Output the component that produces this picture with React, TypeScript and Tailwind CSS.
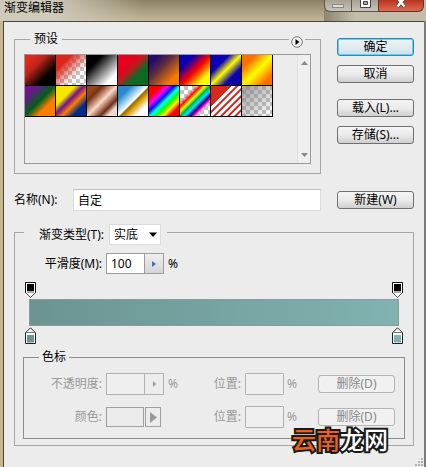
import { useState } from "react";
import type { ReactNode } from "react";

const presets = [
    { name: "前景到背景", fill: "[background:linear-gradient(135deg,#e0281c_15%,#c0241a_35%,#000_72%)]" },
    { name: "前景到透明", fill: "[background:linear-gradient(135deg,#dc2418_25%,#dc241800_68%),repeating-conic-gradient(#c4c4c4_0_25%,#fff_0_50%)_0_0/8px_8px]" },
    { name: "黑白", fill: "[background:linear-gradient(135deg,#000_26%,#fff_80%)]" },
    { name: "红绿", fill: "[background:linear-gradient(135deg,#e6001e_30%,#c01a1e_46%,#0a6a24_66%)]" },
    { name: "紫橙", fill: "[background:linear-gradient(135deg,#260a6e_15%,#5a2c40_40%,#f87a04_80%)]" },
    { name: "蓝红黄", fill: "[background:linear-gradient(135deg,#0a00b2_24%,#ff0000_52%,#fffc00_80%)]" },
    { name: "蓝黄蓝", fill: "[background:linear-gradient(135deg,#0b01b8_30%,#fdfa00_50%,#0b02aa_72%)]" },
    { name: "橙黄橙", fill: "[background:linear-gradient(135deg,#ff6e02_22%,#ffff00_52%,#ff6d00_84%)]" },
    { name: "紫绿橙", fill: "[background:linear-gradient(135deg,#6f158e_18%,#00601b_50%,#fd7c00_70%)]" },
    { name: "黄紫橙蓝", fill: "[background:linear-gradient(135deg,#f9e600_32%,#6f158e_46%,#fd7c00_60%,#002b86_78%)]" },
    { name: "铜色", fill: "[background:linear-gradient(135deg,#97461a_14%,#7a3210_26%,#fbd8c5_50%,#6c2e16_72%,#efdbcd_84%)]" },
    { name: "铬黄", fill: "[background:linear-gradient(135deg,#2989cc_22%,#8cc8ee_36%,#fff_50%,#906a00_54%,#d99f00_62%,#fff_80%)]" },
    { name: "色谱", fill: "[background:linear-gradient(135deg,#ff0000_20%,#ff00ff_32%,#0000ff_42%,#00ffff_52%,#00ff00_62%,#ffff00_73%,#ff0000_84%)]" },
    { name: "透明彩虹", fill: "[background:linear-gradient(135deg,#ff000000_26%,#ff0000_34%,#fffc00_42%,#01b439_50%,#00eaff_58%,#000390_66%,#ff00c6_72%,#ff00c600_78%),repeating-conic-gradient(#c4c4c4_0_25%,#fff_0_50%)_0_0/8px_8px]" },
    { name: "透明条纹", fill: "[background:linear-gradient(135deg,#d8281c_34%,transparent_34%),repeating-linear-gradient(135deg,#fff_0_2px,#c02c24_3px_4px,#fff_5px)]" },
    { name: "中灰密度", fill: "[background:linear-gradient(135deg,#808080b0_10%,#80808010_90%),repeating-conic-gradient(#c4c4c4_0_25%,#fff_0_50%)_0_0/8px_8px]" },
];

function PushButton({ children, primary, disabled, className = "" }: { children: ReactNode; primary?: boolean; disabled?: boolean; className?: string }) {
    const tone = disabled
        ? "border-[#b4b4b4] bg-[#f1f1f1] text-[#888]"
        : primary
          ? "border-[#2c88b4] bg-linear-to-b from-[#eef3f6] via-[#e4ecf0] to-[#c4e2ee] text-black ring-1 ring-inset ring-[#6fcdea]"
          : "border-[#707070] bg-linear-to-b from-[#f4f4f4] via-[#ebebeb] to-[#cfcfcf] text-black";
    return (
        <button type="button" disabled={disabled} className={`flex h-[18px] w-[77px] shrink-0 items-center justify-center rounded-[3px] border ${tone} ${className}`}>
            {children}
        </button>
    );
}

function OpacityStop({ label }: { label: string }) {
    return (
        <button type="button" aria-label={label}>
            <svg width="11" height="16" viewBox="0 0 11 16" className="block">
                <path d="M.5 .5h10v10L5.5 15.5 .5 10.500z" fill="#fff" stroke="#555" />
                <path d="M.5 11V.5h10V11" fill="none" stroke="#111" />
                <path d="M2 9h7v2H2z" fill="#aaa" />
                <path d="M2 2h7v7H2z" fill="#000" />
            </svg>
        </button>
    );
}

function ColorStop({ label, color }: { label: string; color: string }) {
    return (
        <button type="button" aria-label={label}>
            <svg width="11" height="17" viewBox="0 0 11 17" className="block">
                <path d="M5.500 .8l5 5v10.700H.5V5.800z" fill="#fff" stroke="#222" />
                <path d="M1 5.500h9" stroke="#777" />
                <path d="M2 8h7v7.500H2z" fill={color} />
            </svg>
        </button>
    );
}

function PositionFields({ id }: { id: string }) {
    return (
        <>
            <label htmlFor={id} className="flex-1 text-right">位置:</label>
            <input id={id} disabled className="ml-1 h-[22px] w-[39px] rounded-[1px] border border-[#b0b0b0] bg-[#efefef]" />
            <span className="ml-[3px] w-[14px]">%</span>
            <PushButton disabled className="ml-[17px]">删除(D)</PushButton>
        </>
    );
}

export default function App() {
    const [name, setName] = useState("自定");
    const [smoothness, setSmoothness] = useState("100");

    return (
        <div className="relative flex min-h-screen flex-col overflow-hidden bg-linear-to-r from-[#c8b78f] from-50% to-[#7c7d6c] to-50% pr-[2px] pl-[3px] font-['Noto_Sans','Noto_Sans_CJK_SC',sans-serif] text-[12px] leading-[18px] text-black">
            {/* Title bar */}
            <header className="-mr-[2px] -ml-[3px] flex h-[21px] items-start justify-between [background:linear-gradient(90deg,#d0cabb_12%,#d0cabb00_34%),linear-gradient(180deg,#8b8063,#a89d7e_50%,#c2b797)]">
                <h1 className="pl-1 leading-[16px]">渐变编辑器</h1>
                <div className="flex h-full w-[102px] bg-linear-to-r from-[#8d8570] to-[#c3bcab] to-30%">
                    <button type="button" aria-label="最小化" className="flex h-[12px] w-[28px] items-center justify-center rounded-bl-md border border-t-0 border-[#5c574e] bg-linear-to-b from-[#a8a294] to-[#c9c4b9]">
                        <span className="h-[4px] w-[12px] border border-[#8d887f] bg-[#ddd]" />
                    </button>
                    <button type="button" aria-label="最大化" className="flex h-[12px] w-[26px] items-start justify-center border-b border-[#5c574e] bg-linear-to-b from-[#a8a294] to-[#c9c4b9]">
                        <svg width="11" height="8" viewBox="0 0 11 8">
                            <path d="M.5 0v7.500h10V0" fill="#fff" stroke="#444" />
                            <path d="M3.500 1.500h4v3h-4z" fill="#aaa" stroke="#444" />
                        </svg>
                    </button>
                    <button type="button" aria-label="关闭" className="flex h-[12px] w-[46px] items-start justify-center rounded-br-md border border-t-0 border-[#63322a] bg-linear-to-b from-[#b8331f] to-[#df6a4e]">
                        <svg width="12" height="8" viewBox="0 0 12 8">
                            <path d="M2.500 -2l7 8.500M9.500 -2l-7 8.500" stroke="#5a3a38" strokeWidth="4" />
                            <path d="M2.500 -2l7 8.500M9.500 -2l-7 8.500" stroke="#fff" strokeWidth="2.500" />
                        </svg>
                    </button>
                </div>
            </header>

            <main className="relative flex-1 border-t border-l border-[#4b463a] bg-[#ececec] px-[10px] pt-2 pb-[20px]">
                {/* Presets */}
                <div className="flex gap-4">
                    <div className="relative min-w-0 flex-1">
                        <fieldset className="min-w-0 border border-[#a6a6a6] px-[9px] pt-[6px] pb-[9px]">
                            <legend className="ml-[6px] px-1 leading-[18px]">预设</legend>
                            <div className="flex h-[110px] justify-between border border-[#9a9a9a]">
                                <div className="grid grid-cols-8 content-start">
                                    {presets.map((p) => (
                                        <button key={p.name} type="button" aria-label={p.name} className={`size-[31px] border-r border-b border-black ${p.fill}`} />
                                    ))}
                                </div>
                                <div className="flex w-[13px] flex-col items-center justify-between border-l border-[#e0e0e0] bg-[#efefef] py-[6px]">
                                    <svg width="7" height="4" viewBox="0 0 7 4"><path d="M0 4l3.500-4L7 4z" fill="#888" /></svg>
                                    <svg width="7" height="4" viewBox="0 0 7 4"><path d="M0 0l3.500 4L7 0z" fill="#888" /></svg>
                                </div>
                            </div>
                        </fieldset>
                        <button type="button" aria-label="预设菜单" className="absolute top-[6px] right-4 bg-[#ececec] px-[2px]">
                            <svg width="12" height="12" viewBox="0 0 12 12" className="block">
                                <circle cx="6" cy="6" r="5.300" fill="#f2f2f2" stroke="#777" />
                                <path d="M4.500 3v6l4-3z" fill="#000" />
                            </svg>
                        </button>
                    </div>

                    <div className="flex flex-col gap-[9px] pt-2">
                        <PushButton primary>确定</PushButton>
                        <PushButton>取消</PushButton>
                        <PushButton className="mt-[7px]">载入(L)...</PushButton>
                        <PushButton>存储(S)...</PushButton>
                    </div>
                </div>

                {/* Name */}
                <div className="mt-[15px] flex items-center">
                    <label htmlFor="name" className="w-[59px]">名称(N):</label>
                    <input id="name" value={name} onChange={(e) => setName(e.target.value)} className="mr-4 h-[22px] min-w-0 flex-1 border border-[#dcdcdc] border-t-[#c4c4c4] bg-white px-1" />
                    <PushButton>新建(W)</PushButton>
                </div>

                {/* Gradient settings */}
                <fieldset className="mt-[9px] min-w-0 border border-[#a6a6a6] px-[10px] pb-[6px]">
                    <legend className="-ml-px pt-1 pr-[6px]">
                        <span className="flex items-center">
                            <label htmlFor="type" className="w-[80px] text-right">渐变类型(T):</label>
                            <span className="relative ml-[5px] flex items-center">
                                <select id="type" className="h-[21px] w-[52px] appearance-none border border-[#dcdcdc] bg-white pl-1 text-[12px]">
                                    <option>实底</option>
                                    <option>杂色</option>
                                </select>
                                <svg width="8" height="5" viewBox="0 0 8 5" className="pointer-events-none absolute right-1"><path d="M0 .5h8L4 5z" fill="#000" /></svg>
                            </span>
                        </span>
                    </legend>

                    <div className="mt-2 flex items-center">
                        <label htmlFor="smooth" className="w-[77px] text-right">平滑度(M):</label>
                        <input id="smooth" value={smoothness} onChange={(e) => setSmoothness(e.target.value)} className="ml-1 h-[21px] w-[39px] border border-[#9c9c9c] bg-white px-1" />
                        <button type="button" aria-label="调整平滑度" className="flex h-[21px] w-[19px] items-center justify-center border border-l-0 border-[#9c9c9c] bg-linear-to-b from-[#eee] to-[#d6d6d6]">
                            <svg width="4" height="6" viewBox="0 0 4 6"><path d="M0 0v6l4-3z" fill="#4a6db4" /></svg>
                        </button>
                        <span className="ml-1">%</span>
                    </div>

                    <div className="mt-2 flex justify-between">
                        <OpacityStop label="左不透明度色标" />
                        <OpacityStop label="右不透明度色标" />
                    </div>
                    <div className="mx-1 mt-px mb-px h-[27px] border border-[#8b9b99] bg-linear-to-r from-[#6b9491] to-[#80b3b1]" />
                    <div className="flex justify-between">
                        <ColorStop label="左色标" color="#6b9491" />
                        <ColorStop label="右色标" color="#80b3b1" />
                    </div>

                    {/* Stops */}
                    <fieldset className="-mx-[2px] mt-1 min-w-0 border border-[#8c8c8c] pt-[7px] pr-[9px] pb-[10px] text-[#999]">
                        <legend className="ml-[15px] px-[3px] text-black">色标</legend>
                        <div className="flex flex-col gap-[11px]">
                            <div className="flex items-center">
                                <label htmlFor="opacity" className="w-[78px] text-right">不透明度:</label>
                                <input id="opacity" disabled className="ml-1 h-[22px] w-[39px] border border-[#b0b0b0] bg-[#efefef]" />
                                <button type="button" disabled aria-label="调整不透明度" className="flex h-[22px] w-[19px] items-center justify-center border border-l-0 border-[#b0b0b0]">
                                    <svg width="3" height="6" viewBox="0 0 3 6"><path d="M0 0v6l3-3z" fill="#999" /></svg>
                                </button>
                                <span className="ml-1">%</span>
                                <PositionFields id="opacity-pos" />
                            </div>
                            <div className="flex items-center">
                                <span className="w-[78px] text-right">颜色:</span>
                                <button type="button" disabled aria-label="颜色" className="ml-1 h-[20px] w-[38px] border border-[#a0a0a0]" />
                                <button type="button" disabled aria-label="颜色菜单" className="ml-px flex h-[20px] w-[16px] items-center justify-center border border-[#a0a0a0]">
                                    <svg width="7" height="11" viewBox="0 0 7 11"><path d="M0 0v11l7-5.500z" fill="#999" /></svg>
                                </button>
                                <PositionFields id="color-pos" />
                            </div>
                        </div>
                    </fieldset>
                </fieldset>

                {/* Resize grip */}
                <svg width="10" height="10" viewBox="0 0 10 10" className="absolute right-0 bottom-0" fill="#b0b0b0">
                    <path d="M7 1h2v2H7zM4 4h2v2H4zM7 4h2v2H7zM1 7h2v2H1zM4 7h2v2H4zM7 7h2v2H7z" />
                </svg>
            </main>

            <div className="pointer-events-none absolute right-[38px] bottom-[15px] text-[24px] leading-[24px] font-medium text-white [-webkit-text-stroke:4px_#1a1a1a] [paint-order:stroke]">
                <span className="text-[#e8601c]">云南</span>龙网
            </div>
        </div>
    );
}
